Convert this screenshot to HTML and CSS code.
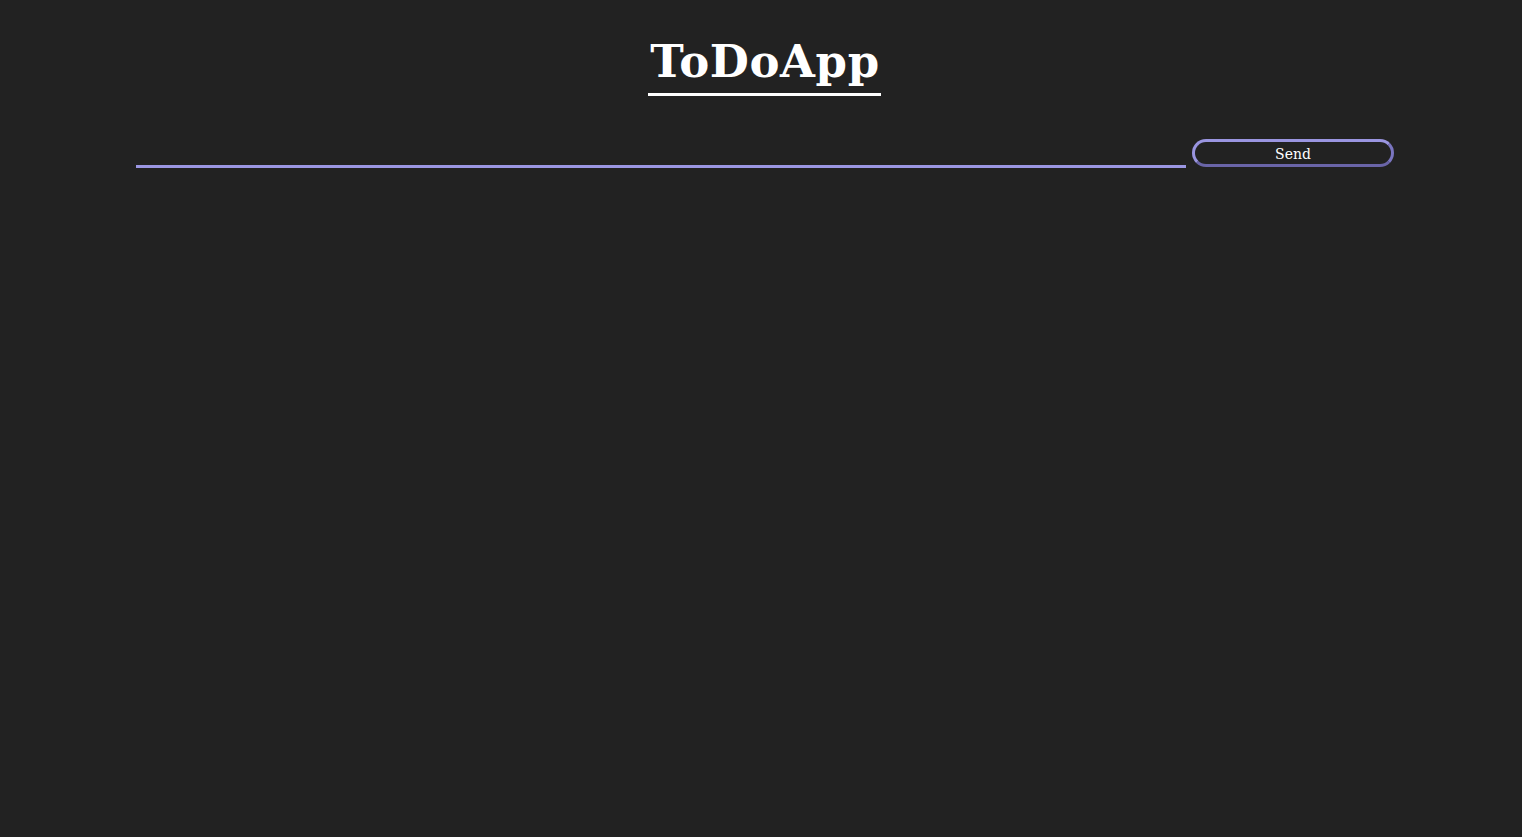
FILE: index.html
```html
<!DOCTYPE html>
<html>
<head>
<meta charset="utf-8">
<title>ToDoApp</title>
<link rel="stylesheet" href="styles.css">
</head>
<body>
<main class="app">
  <header class="app-header">
    <h1 class="app-title">ToDoApp</h1>
  </header>
  <form class="todo-form">
    <input class="todo-input" type="text">
    <button class="todo-send" type="button">Send</button>
  </form>
</main>
</body>
</html>
```
FILE: styles.css
```css
html, body {
  margin: 0;
  height: 100%;
  background: #222222;
}
body {
  padding-left: 7px;
  box-sizing: border-box;
  font-family: "DejaVu Serif", serif;
  color: #ffffff;
}
.app {
  display: flex;
  flex-direction: column;
  align-items: center;
}
.app-header {
  padding-top: 34px;
  display: flex;
  justify-content: center;
}
.app-title {
  margin: 0;
  font-family: "DejaVu Serif", serif;
  font-weight: bold;
  font-size: 45px;
  letter-spacing: 0.6px;
  line-height: 56px;
  color: #ffffff;
  border-bottom: 3px solid #ffffff;
  padding: 0 1px 3px 2px;
}
.todo-form {
  margin-top: 43px;
  width: 1257px;
  display: flex;
  align-items: flex-end;
  gap: 6px;
}
.todo-input {
  flex: 0 0 1050px;
  height: 24px;
  box-sizing: border-box;
  background: transparent;
  border: none;
  border-bottom: 3px solid #9b96e2;
  outline: none;
  color: #fff;
  font-family: "DejaVu Serif", serif;
  font-size: 16px;
  padding: 0 4px;
  margin-bottom: -1px;
}
.todo-send {
  flex: 0 0 202px;
  height: 28px;
  box-sizing: border-box;
  background: #222222;
  color: #ffffff;
  border: 3px solid;
  border-color: #9a95e0 #7a75c0 #6a65a8 #9a95e0;
  border-radius: 14px;
  font-family: "DejaVu Serif", serif;
  font-size: 14px;
  line-height: 20px;
  padding: 1px 0 0;
  margin-bottom: 0;
  cursor: pointer;
}
```
